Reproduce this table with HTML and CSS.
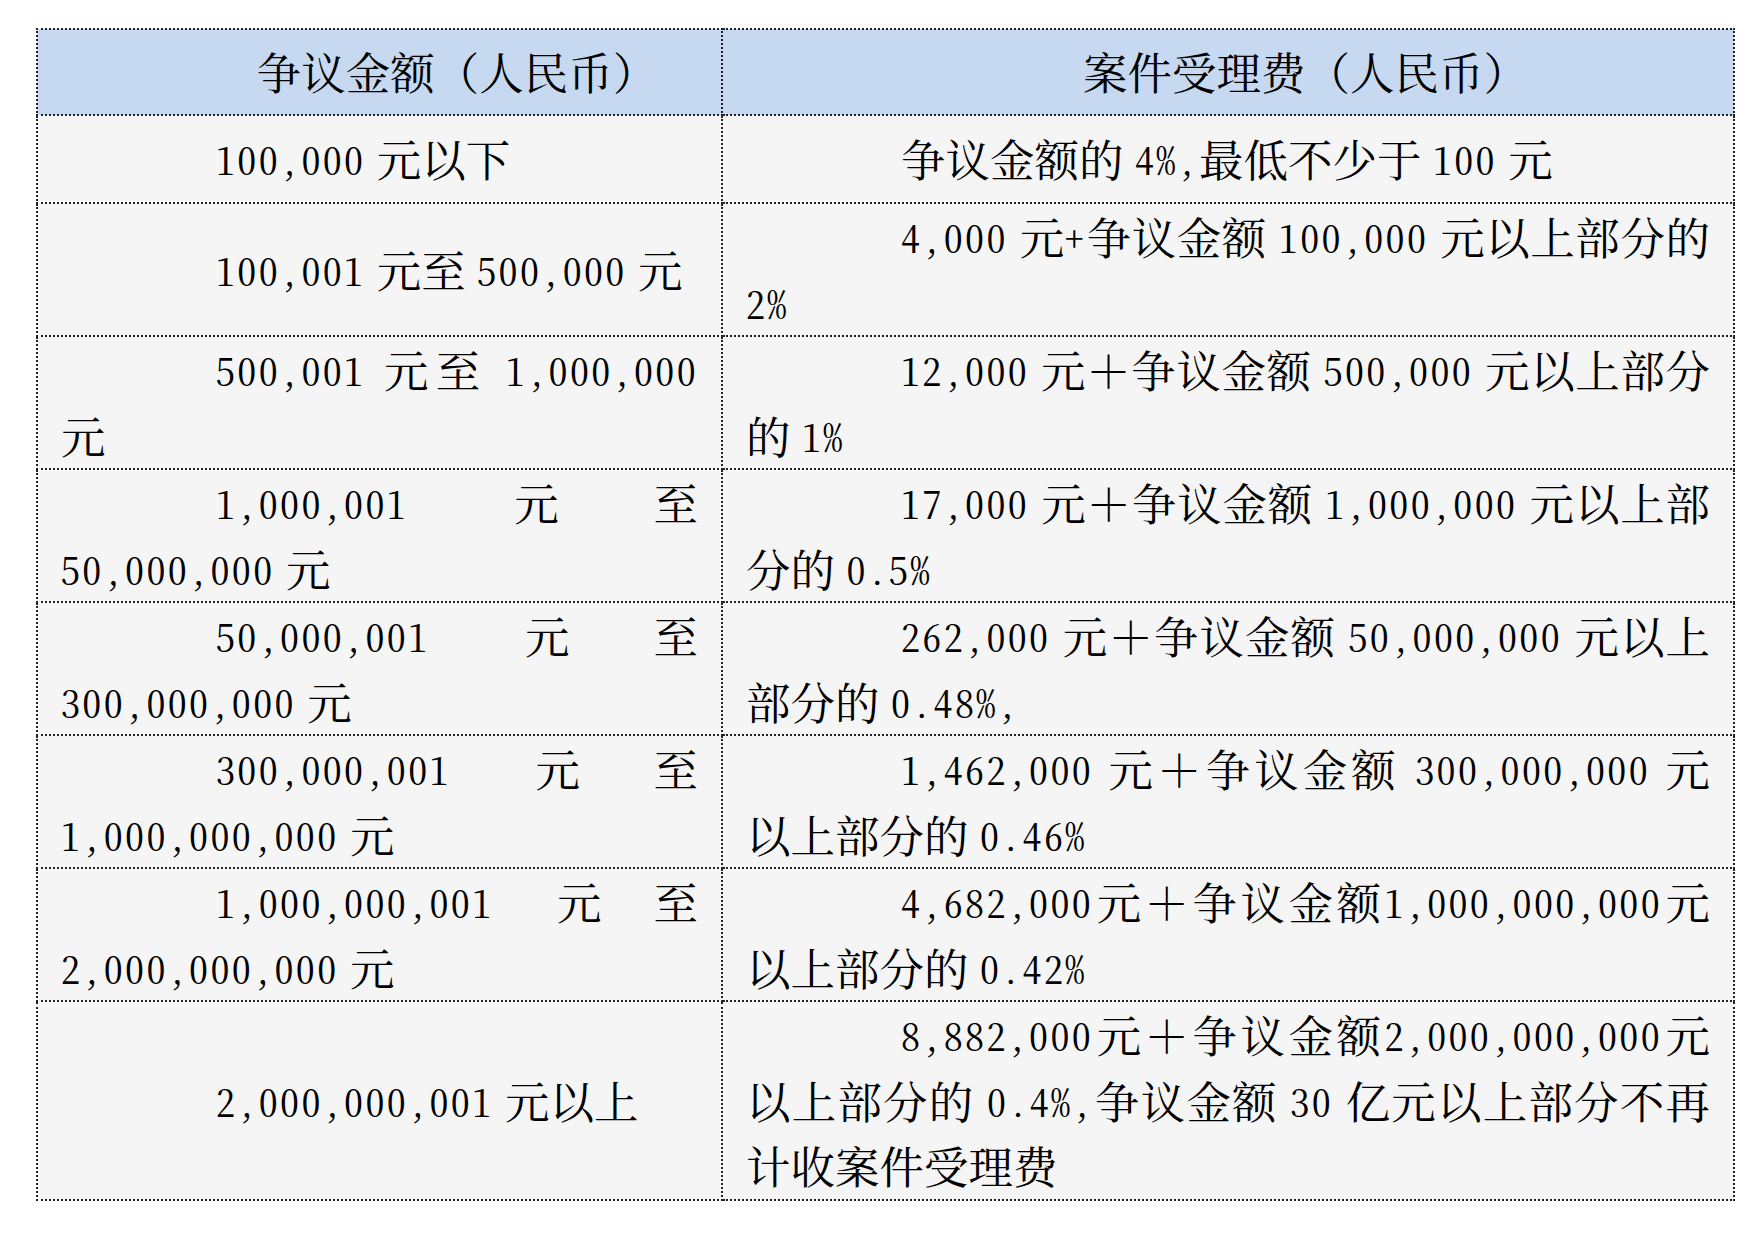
FILE: index.html
```html
<!DOCTYPE html>
<html lang="zh-CN">
<head>
<meta charset="utf-8">
<title>案件受理费</title>
<link rel="stylesheet" href="styles.css">
</head>
<body>
<table class="fees">
  <colgroup>
    <col class="col-amount">
    <col class="col-fee">
  </colgroup>
  <thead>
    <tr class="head-row">
      <th>争议金额（人民币）</th>
      <th>案件受理费（人民币）</th>
    </tr>
  </thead>
  <tbody>
    <tr class="single">
      <td><span class="n">100,000</span> 元以下</td>
      <td>争议金额的 <span class="n">4%,</span>最低不少于 <span class="n">100</span> 元</td>
    </tr>
    <tr>
      <td><span class="n">100,001</span> 元至 <span class="n">500,000</span> 元</td>
      <td><span class="n">4,000</span> 元<span class="n">+</span>争议金额 <span class="n">100,000</span> 元以上部分的 <span class="n">2%</span></td>
    </tr>
    <tr>
      <td><span class="n">500,001</span> 元至 <span class="n">1,000,000</span> 元</td>
      <td><span class="n">12,000</span> 元＋争议金额 <span class="n">500,000</span> 元以上部分的 <span class="n">1%</span></td>
    </tr>
    <tr>
      <td><span class="n">1,000,001</span> 元至 <span class="n">50,000,000</span> 元</td>
      <td><span class="n">17,000</span> 元＋争议金额 <span class="n">1,000,000</span> 元以上部分的 <span class="n">0.5%</span></td>
    </tr>
    <tr>
      <td><span class="n">50,000,001</span> 元至 <span class="n">300,000,000</span> 元</td>
      <td><span class="n">262,000</span> 元＋争议金额 <span class="n">50,000,000</span> 元以上部分的 <span class="n">0.48%,</span></td>
    </tr>
    <tr>
      <td><span class="n">300,000,001</span> 元至 <span class="n">1,000,000,000</span> 元</td>
      <td><span class="n">1,462,000</span> 元＋争议金额 <span class="n">300,000,000</span> 元以上部分的 <span class="n">0.46%</span></td>
    </tr>
    <tr>
      <td><span class="n">1,000,000,001</span> 元至 <span class="n">2,000,000,000</span> 元</td>
      <td><span class="n">4,682,000</span>元＋争议金额<span class="n">1,000,000,000</span>元以上部分的 <span class="n">0.42%</span></td>
    </tr>
    <tr>
      <td><span class="n">2,000,000,001</span> 元以上</td>
      <td><span class="n">8,882,000</span>元＋争议金额<span class="n">2,000,000,000</span>元以上部分的 <span class="n">0.4%,</span>争议金额 <span class="n">30</span> 亿元以上部分不再计收案件受理费</td>
    </tr>
  </tbody>
</table>
</body>
</html>
```

FILE: styles.css
```css
html, body {
  margin: 0;
  padding: 0;
  background: #ffffff;
}

body {
  font-family: "Noto Serif CJK SC", "Noto Sans CJK SC", sans-serif;
  color: #000000;
}

.fees {
  margin: 28px 0 0 36px;
  width: 1697px;
  table-layout: fixed;
  border-collapse: collapse;
}

.col-amount {
  width: 685px;
}

.col-fee {
  width: 1012px;
}

.fees th,
.fees td {
  border: 2px dotted #222222;
  padding: 0 23px;
  font-size: 44.5px;
  line-height: 65.5px;
  text-indent: 155px;
  vertical-align: middle;
  font-weight: normal;
}

.fees th {
  background: #c6d9f1;
  text-align: center;
}

.fees td {
  background: #f5f5f5;
  text-align: justify;
}

.head-row {
  height: 86px;
}

.single {
  height: 88px;
}

.n {
  font-size: 38px;
  letter-spacing: 2.35px;
  line-height: 1;
  vertical-align: 2px;
  font-feature-settings: "hwid" 1;
}
```
